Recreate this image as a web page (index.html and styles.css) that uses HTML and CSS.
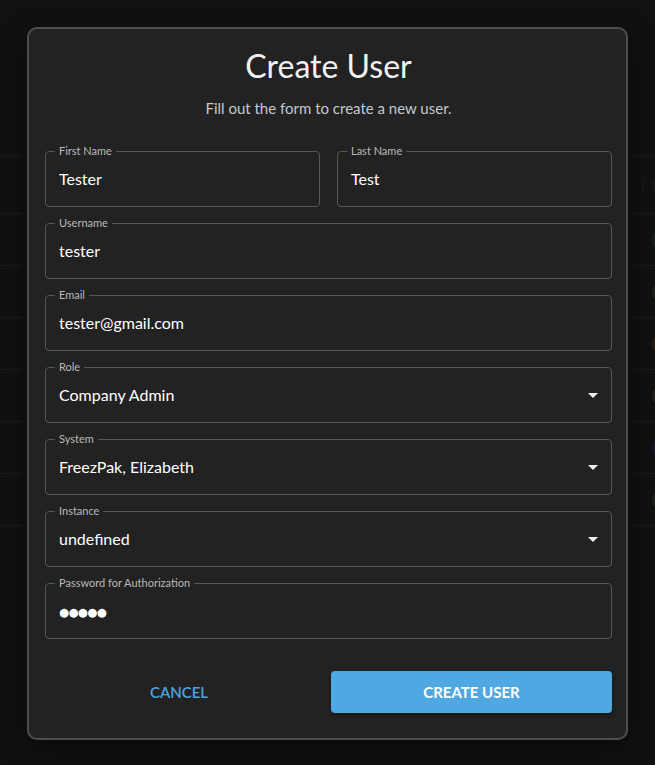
FILE: index.html
```html
<!DOCTYPE html>
<html lang="en">
<head>
<meta charset="utf-8">
<title>Create User</title>
<link rel="stylesheet" href="styles.css">
</head>
<body>
<div class="page">
  <div class="page-header"></div>
  <div class="table-row head-row"><span class="bar"></span><span class="bar"></span></div>
  <div class="table-row"><span class="dot dot-green"></span></div>
  <div class="table-row"><span class="dot dot-green"></span></div>
  <div class="table-row"><span class="dot dot-orange"></span></div>
  <div class="table-row"><span class="dot dot-orange"></span></div>
  <div class="table-row"><span class="dot dot-blue"></span></div>
  <div class="table-row"><span class="dot dot-green"></span></div>
</div>

<div class="dialog">
  <h1 class="title">Create User</h1>
  <p class="subtitle">Fill out the form to create a new user.</p>

  <form class="form">
    <div class="row-2">
      <fieldset class="field">
        <legend>First Name</legend>
        <div class="value">Tester</div>
      </fieldset>
      <fieldset class="field">
        <legend>Last Name</legend>
        <div class="value">Test</div>
      </fieldset>
    </div>
    <fieldset class="field">
      <legend>Username</legend>
      <div class="value">tester</div>
    </fieldset>
    <fieldset class="field">
      <legend>Email</legend>
      <div class="value">tester@gmail.com</div>
    </fieldset>
    <fieldset class="field">
      <legend>Role</legend>
      <div class="value select">
        <span>Company Admin</span>
        <svg class="arrow" viewBox="0 0 24 24" width="24" height="24"><path d="M7 10l5 5 5-5z"/></svg>
      </div>
    </fieldset>
    <fieldset class="field">
      <legend>System</legend>
      <div class="value select">
        <span>FreezPak, Elizabeth</span>
        <svg class="arrow" viewBox="0 0 24 24" width="24" height="24"><path d="M7 10l5 5 5-5z"/></svg>
      </div>
    </fieldset>
    <fieldset class="field">
      <legend>Instance</legend>
      <div class="value select">
        <span>undefined</span>
        <svg class="arrow" viewBox="0 0 24 24" width="24" height="24"><path d="M7 10l5 5 5-5z"/></svg>
      </div>
    </fieldset>
    <fieldset class="field">
      <legend>Password for Authorization</legend>
      <div class="value password">●●●●●</div>
    </fieldset>

    <div class="actions">
      <button type="button" class="btn btn-text">Cancel</button>
      <button type="button" class="btn btn-primary">Create User</button>
    </div>
  </form>
</div>
</body>
</html>
```

FILE: styles.css
```css
* { box-sizing: border-box; }

html, body {
  margin: 0;
  padding: 0;
  height: 100%;
}

body {
  background: #111111;
  font-family: "Lato", "Noto Sans", sans-serif;
  color: #ffffff;
  overflow: hidden;
  position: relative;
}

/* background page (table behind the modal) */
.page-header {
  height: 157px;
  border-bottom: 1px solid #1a1a1a;
}

.table-row {
  height: 52px;
  border-bottom: 1px solid #1a1a1a;
  display: flex;
  align-items: center;
  justify-content: flex-end;
}

.head-row {
  height: 57px;
  gap: 9px;
  padding-right: 0;
}

.bar {
  width: 2px;
  height: 12px;
  background: #171717;
}

.dot {
  width: 20px;
  height: 20px;
  border-radius: 50%;
  margin-right: -17px;
}
.dot-green { background: #18231a; }
.dot-orange { background: #261f15; }
.dot-blue { background: #171728; }

/* modal */
.dialog {
  position: absolute;
  left: 27px;
  top: 27px;
  width: 601px;
  background: #222222;
  border: 2px solid #4e4e4e;
  border-radius: 10px;
  padding: 17px 14px 25px 16px;
  box-shadow: 0 8px 24px rgba(0, 0, 0, 0.5);
}

.title {
  margin: 0;
  text-align: center;
  font-size: 32px;
  line-height: 40px;
  font-weight: 400;
  color: #f2f2f2;
}

.subtitle {
  margin: 12px 0 0;
  text-align: center;
  font-size: 15px;
  line-height: 20px;
  color: #c3c8ce;
}

.form {
  margin-top: 27px;
  display: flex;
  flex-direction: column;
  gap: 10px;
}

.row-2 {
  display: grid;
  grid-template-columns: 1fr 1fr;
  gap: 17px;
}

.field {
  margin: 0;
  min-width: 0;
  border: 1px solid #575757;
  border-radius: 4px;
  padding: 0 13px;
}

.field legend {
  font-size: 11px;
  line-height: 12px;
  color: #b9b9b9;
  padding: 0 4px;
  margin-left: -4px;
}

.value {
  font-size: 16px;
  line-height: 20px;
  height: 49px;
  padding: 12px 0 17px;
  color: #ffffff;
}

.select {
  display: flex;
  align-items: center;
  justify-content: space-between;
  padding: 0 0 5px;
}

.arrow {
  fill: #eeeeee;
  margin-right: -7px;
  flex: none;
}

.password {
  font-family: "DejaVu Sans", sans-serif;
  font-size: 11.5px;
  letter-spacing: -0.6px;
  padding-top: 13px;
  padding-bottom: 16px;
}

.actions {
  margin-top: 22px;
  display: grid;
  grid-template-columns: 268px 1fr;
  gap: 18px;
}

.btn {
  height: 42px;
  border: none;
  border-radius: 4px;
  font-family: "Lato", "Noto Sans", sans-serif;
  font-size: 15px;
  font-weight: 700;
  text-transform: uppercase;
  letter-spacing: 0;
  cursor: pointer;
}

.btn-text {
  background: transparent;
  color: #4ba3e0;
  font-weight: 600;
}

.btn-primary {
  background: #4fa8e2;
  color: #ffffff;
  box-shadow: 0 2px 4px rgba(0, 0, 0, 0.35);
}
```
